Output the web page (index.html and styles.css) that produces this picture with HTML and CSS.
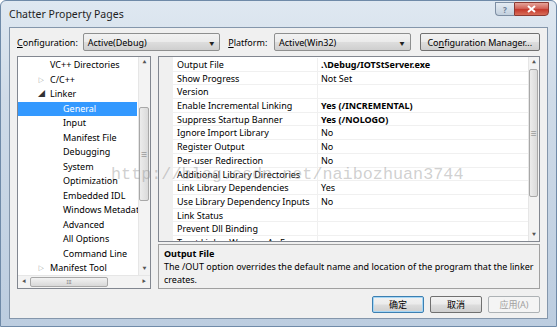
FILE: index.html
```html
<!DOCTYPE html>
<html lang="en">
<head>
    <meta charset="UTF-8">
    <title>Chatter Property Pages</title>
    <link rel="stylesheet" href="styles.css">
</head>
<body>
<div class="window">
    <div class="titlebar">
        <span class="title">Chatter Property Pages</span>
        <div class="caption-btns">
            <span class="cap-help">?</span>
            <span class="cap-close">
                <svg width="9" height="8" viewBox="0 0 9 8"><path d="M1 1 L8 7 M8 1 L1 7" stroke="#fff" stroke-width="2"/></svg>
            </span>
        </div>
    </div>

    <div class="client">
        <div class="config-row">
            <span class="lbl"><u>C</u>onfiguration:</span>
            <div class="combo combo-config">Active(Debug)<span class="arrow">&#9660;</span></div>
            <span class="lbl lbl-platform"><u>P</u>latform:</span>
            <div class="combo combo-platform">Active(Win32)<span class="arrow">&#9660;</span></div>
            <button class="btn btn-manager">Co<u>n</u>figuration Manager...</button>
        </div>

        <div class="main">
            <div class="tree">
                <div class="tree-body">
                    <ul class="tree-items">
                        <li class="lvl1">VC++ Directories</li>
                        <li class="lvl1"><span class="exp">&#9655;</span>C/C++</li>
                        <li class="lvl1"><span class="exp open">&#9698;</span>Linker</li>
                        <li class="lvl2 selected">General</li>
                        <li class="lvl2">Input</li>
                        <li class="lvl2">Manifest File</li>
                        <li class="lvl2">Debugging</li>
                        <li class="lvl2">System</li>
                        <li class="lvl2">Optimization</li>
                        <li class="lvl2">Embedded IDL</li>
                        <li class="lvl2">Windows Metadata</li>
                        <li class="lvl2">Advanced</li>
                        <li class="lvl2">All Options</li>
                        <li class="lvl2">Command Line</li>
                        <li class="lvl1"><span class="exp">&#9655;</span>Manifest Tool</li>
                    </ul>
                    <div class="vscroll tree-vscroll">
                        <span class="sarrow">&#9650;</span>
                        <div class="vtrack"><div class="vthumb tree-thumb"><span class="grip">&#8801;</span></div></div>
                        <span class="sarrow">&#9660;</span>
                    </div>
                </div>
                <div class="hscroll">
                    <span class="sarrow">&#9664;</span>
                    <div class="htrack"><div class="hthumb"><span class="grip">III</span></div></div>
                    <span class="sarrow">&#9654;</span>
                </div>
            </div>

            <div class="right">
                <div class="grid">
                    <div class="grid-rows">
                        <div class="row"><span class="name">Output File</span><span class="value bold">.\Debug/IOTStServer.exe</span></div>
                        <div class="row"><span class="name">Show Progress</span><span class="value">Not Set</span></div>
                        <div class="row"><span class="name">Version</span><span class="value"></span></div>
                        <div class="row"><span class="name">Enable Incremental Linking</span><span class="value bold">Yes (/INCREMENTAL)</span></div>
                        <div class="row"><span class="name">Suppress Startup Banner</span><span class="value bold">Yes (/NOLOGO)</span></div>
                        <div class="row"><span class="name">Ignore Import Library</span><span class="value">No</span></div>
                        <div class="row"><span class="name">Register Output</span><span class="value">No</span></div>
                        <div class="row"><span class="name">Per-user Redirection</span><span class="value">No</span></div>
                        <div class="row"><span class="name">Additional Library Directories</span><span class="value"></span></div>
                        <div class="row"><span class="name">Link Library Dependencies</span><span class="value">Yes</span></div>
                        <div class="row"><span class="name">Use Library Dependency Inputs</span><span class="value">No</span></div>
                        <div class="row"><span class="name">Link Status</span><span class="value"></span></div>
                        <div class="row"><span class="name">Prevent Dll Binding</span><span class="value"></span></div>
                        <div class="row"><span class="name">Treat Linker Warning As Errors</span><span class="value"></span></div>
                    </div>
                    <div class="vscroll grid-vscroll">
                        <span class="sarrow">&#9650;</span>
                        <div class="vtrack"><div class="vthumb grid-thumb"><span class="grip">&#8801;</span></div></div>
                        <span class="sarrow">&#9660;</span>
                    </div>
                </div>
                <div class="desc">
                    <div class="desc-title">Output File</div>
                    <div class="desc-text">The /OUT option overrides the default name and location of the program that the linker creates.</div>
                </div>
            </div>
        </div>

        <div class="buttons">
            <button class="btn btn-dlg btn-default">确定</button>
            <button class="btn btn-dlg">取消</button>
            <button class="btn btn-dlg btn-disabled">应用(A)</button>
        </div>
    </div>

    <div class="watermark">http://blog.csdn.net/naibozhuan3744</div>
</div>
</body>
</html>
```

FILE: styles.css
```css
:root {
    --face: #f0f0f0;
    --border: #828790;
    --select: #3399ff;
    --text: #000;
}

* {
    box-sizing: border-box;
}

body {
    margin: 0;
    width: 557px;
    height: 327px;
    overflow: hidden;
    font-family: 'Noto Sans', 'Noto Sans CJK SC', sans-serif;
    font-size: 9px;
    color: var(--text);
}

.window {
    position: relative;
    width: 557px;
    height: 327px;
    display: flex;
    flex-direction: column;
    padding: 0 8px 7px 8px;
    background: linear-gradient(to bottom, #dfe8f1 0%, #cfdbe8 30%, #bccde0 100%);
    border: 1px solid #6f8aa8;
    border-radius: 6px 6px 0 0;
}

/* title bar */
.titlebar {
    height: 26px;
    display: flex;
    align-items: flex-start;
    justify-content: space-between;
}

.title {
    margin-top: 6px;
    font-size: 10.5px;
    color: #1e1e1e;
}

.caption-btns {
    display: flex;
    margin-top: 1px;
    margin-right: -1px;
}

.cap-help,
.cap-close {
    height: 14px;
    display: flex;
    align-items: center;
    justify-content: center;
    border: 1px solid #7d8ea3;
}

.cap-help {
    width: 19px;
    border-radius: 0 0 0 4px;
    border-right: none;
    background: linear-gradient(to bottom, #e4ebf2, #c3d0de);
    color: #6d7f96;
    font-size: 8px;
    font-weight: bold;
}

.cap-close {
    width: 35px;
    border-radius: 0 0 4px 0;
    border-color: #8b3a33;
    background: linear-gradient(to bottom, #e5a398 0%, #d2645a 45%, #c5392c 55%, #d86e5a 100%);
}

/* client area */
.client {
    flex: 1;
    background: var(--face);
    border: 1px solid #8496ab;
    display: flex;
    flex-direction: column;
    padding: 5px 7px 0 7px;
}

.config-row {
    display: flex;
    align-items: center;
    height: 18px;
}

.lbl {
    width: 66px;
}

.lbl-platform {
    width: 46px;
    margin-left: 8px;
}

.combo {
    height: 18px;
    border: 1px solid #8e8f8f;
    border-radius: 2px;
    background: linear-gradient(to bottom, #f2f2f2 0%, #ebebeb 48%, #dddddd 52%, #cfcfcf 100%);
    display: flex;
    align-items: center;
    justify-content: space-between;
    padding: 0 5px 0 4px;
}

.combo-config {
    width: 138px;
}

.combo-platform {
    width: 137px;
}

.arrow {
    font-size: 5px;
    color: #222;
}

.btn {
    font-family: inherit;
    font-size: 9px;
    color: var(--text);
    border: 1px solid #707070;
    border-radius: 2px;
    background: linear-gradient(to bottom, #f2f2f2 0%, #ebebeb 48%, #dddddd 52%, #cfcfcf 100%);
    padding: 0;
    height: 18px;
}

.btn-manager {
    width: 121px;
    margin-left: 9px;
}

.main {
    display: flex;
    gap: 7px;
    margin-top: 5px;
    height: 233px;
}

/* tree */
.tree {
    width: 134px;
    border: 1px solid var(--border);
    background: #fff;
    display: flex;
    flex-direction: column;
}

.tree-body {
    flex: 1;
    display: flex;
    min-height: 0;
}

.tree-items {
    list-style: none;
    margin: 0;
    padding: 1px 0 0 0;
    flex: 1;
    overflow: hidden;
    white-space: nowrap;
}

.tree-items li {
    height: 14.5px;
    line-height: 14.5px;
    display: flex;
    align-items: center;
}

.lvl1 {
    padding-left: 32px;
}

.lvl2 {
    padding-left: 45px;
}

.exp {
    width: 12px;
    margin-left: -12px;
    font-size: 6px;
    color: #5a5a5a;
}

.exp.open {
    color: #333;
    font-size: 7px;
}

.selected {
    background: var(--select);
    color: #fff;
    margin-right: 1px;
}

.vscroll {
    width: 12px;
    background: #f3f3f3;
    border-left: 1px solid #e6e6e6;
    display: flex;
    flex-direction: column;
    align-items: center;
}

.sarrow {
    font-size: 4px;
    color: #555;
    height: 12px;
    line-height: 12px;
}

.vtrack {
    flex: 1;
    width: 100%;
    position: relative;
}

.vthumb {
    position: absolute;
    left: 0;
    right: 1px;
    border: 1px solid #a8a8a8;
    border-radius: 2px;
    background: linear-gradient(to right, #ececec, #dadada);
    display: flex;
    align-items: center;
    justify-content: center;
}

.grip {
    font-size: 7px;
    color: #777;
}

.tree-thumb {
    top: 38px;
    height: 94px;
}

.grid-thumb {
    top: 0;
    height: 128px;
}

.hscroll {
    height: 13px;
    background: #f3f3f3;
    border-top: 1px solid #e6e6e6;
    display: flex;
    align-items: center;
    padding: 0 4px;
    gap: 3px;
}

.htrack {
    flex: 1;
    height: 100%;
    position: relative;
}

.hthumb {
    position: absolute;
    left: 1px;
    width: 78px;
    top: 1px;
    bottom: 1px;
    border: 1px solid #a8a8a8;
    border-radius: 2px;
    background: linear-gradient(to bottom, #f2f2f2, #d8d8d8);
    display: flex;
    align-items: center;
    justify-content: center;
}

.hthumb .grip {
    font-size: 5px;
    letter-spacing: 0;
}

/* property grid */
.right {
    flex: 1;
    display: flex;
    flex-direction: column;
    gap: 2px;
}

.grid {
    height: 189px;
    border: 1px solid var(--border);
    background: #fff;
    display: flex;
    overflow: hidden;
}

.grid-rows {
    flex: 1;
    padding-top: 1px;
    overflow: hidden;
    background: linear-gradient(to right, #f0f0f0 0, #f0f0f0 14px, #fff 14px);
}

.row {
    display: flex;
    height: 13.7px;
    line-height: 13px;
    border-bottom: 1px solid #f0f0f0;
    white-space: nowrap;
}

.name {
    width: 159px;
    padding-left: 18px;
    border-right: 1px solid #f0f0f0;
    overflow: hidden;
}

.value {
    flex: 1;
    padding-left: 3px;
}

.bold {
    font-weight: bold;
}

.grid-vscroll {
    width: 11px;
}

.desc {
    flex: 1;
    border: 1px solid #a0a0a0;
    background: var(--face);
    padding: 2px 5px;
    line-height: 13px;
}

.desc-title {
    font-weight: bold;
}

/* dialog buttons */
.buttons {
    display: flex;
    justify-content: flex-end;
    gap: 6px;
    margin-top: 7px;
    padding-right: 0;
}

.btn-dlg {
    width: 52px;
    height: 17px;
    font-size: 9px;
}

.btn-default {
    border-color: #3c7fb1;
    box-shadow: inset 0 0 0 1px #a5d6f5;
}

.btn-disabled {
    border-color: #adb2b5;
    background: #f4f4f4;
    color: #a0a0a0;
}

/* blog watermark */
.watermark {
    position: absolute;
    left: 110px;
    top: 164px;
    font-family: 'Liberation Mono', monospace;
    font-size: 16.8px;
    color: rgba(150, 150, 150, 0.45);
    pointer-events: none;
    white-space: nowrap;
}
```
